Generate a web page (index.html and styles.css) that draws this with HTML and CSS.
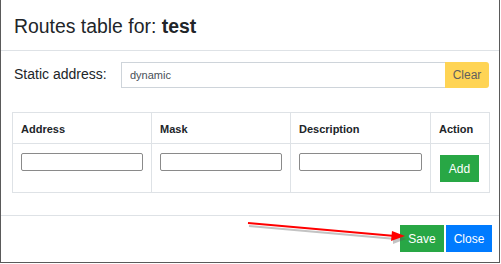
FILE: index.html
```html
<!DOCTYPE html>
<html lang="en">
<head>
    <meta charset="UTF-8">
    <meta name="viewport" content="width=device-width, initial-scale=1.0">
    <title>Routes table</title>
    <link rel="stylesheet" href="styles.css">
</head>
<body>
    <div class="modal">
        <div class="modal-header">
            <h5 class="modal-title">Routes table for: <b>test</b></h5>
        </div>
        <div class="modal-body">
            <div class="address-row">
                <label for="staticAddress">Static address:</label>
                <div class="input-group">
                    <input id="staticAddress" type="text" value="dynamic">
                    <button class="btn btn-clear">Clear</button>
                </div>
            </div>
            <table class="routes">
                <colgroup>
                    <col class="col-address">
                    <col class="col-mask">
                    <col class="col-desc">
                    <col class="col-action">
                </colgroup>
                <thead>
                    <tr>
                        <th>Address</th>
                        <th>Mask</th>
                        <th>Description</th>
                        <th>Action</th>
                    </tr>
                </thead>
                <tbody>
                    <tr>
                        <td><input type="text"></td>
                        <td><input type="text"></td>
                        <td><input type="text"></td>
                        <td><button class="btn btn-add">Add</button></td>
                    </tr>
                </tbody>
            </table>
        </div>
        <div class="modal-footer">
            <button class="btn btn-save">Save</button>
            <button class="btn btn-close">Close</button>
        </div>
        <!-- annotation arrow pointing at Save -->
        <svg class="arrow" width="501" height="264" viewBox="0 0 501 264">
            <g opacity="0.35" fill="#555" stroke="#555">
                <line x1="249" y1="226" x2="396" y2="239" stroke-width="2"/>
                <polygon points="393,234 406,239 393,244" stroke="none"/>
            </g>
            <g fill="#ff0000" stroke="#ff0000">
                <line x1="248" y1="223" x2="395" y2="236" stroke-width="2"/>
                <polygon points="392,231 405,236 391,241" stroke="none"/>
            </g>
        </svg>
    </div>
</body>
</html>
```

FILE: styles.css
```css
body {
    margin: 0;
    background-color: #fff;
    font-family: "Liberation Sans", Arial, sans-serif;
    color: #212529;
}
.modal {
    position: relative;
    width: 498px;
    height: 262px;
    border: 1px solid #5a5a5a;
    border-top: none;
    background-color: #fff;
    display: flex;
    flex-direction: column;
}
.modal-header {
    height: 51px;
    border-bottom: 1px solid #dee2e6;
    box-sizing: border-box;
    padding: 0 13px;
    display: flex;
    align-items: center;
}
.modal-title {
    margin: 0;
    font-size: 19.4px;
    font-weight: normal;
    line-height: 24px;
    padding-top: 2px;
}
.modal-title b {
    font-weight: bold;
}
.modal-body {
    padding: 11px 10px 0 11px;
    height: 165px;
    box-sizing: border-box;
    border-bottom: 1px solid #dee2e6;
}
.address-row {
    display: flex;
    align-items: flex-start;
    margin-left: 2px;
}
.address-row label {
    font-size: 14px;
    width: 107px;
    padding-top: 4px;
}
.input-group {
    display: flex;
    flex: 1;
    height: 26px;
}
.input-group input {
    flex: 1;
    height: 26px;
    box-sizing: border-box;
    border: 1px solid #ced4da;
    border-right: none;
    padding: 0 8px;
    font-family: "Liberation Sans", Arial, sans-serif;
    font-size: 11px;
    color: #495057;
    outline: none;
}
.btn {
    border: none;
    font-family: "Liberation Sans", Arial, sans-serif;
    color: #fff;
    padding: 0;
    cursor: pointer;
}
.btn-clear {
    width: 44px;
    height: 26px;
    background-color: #ffd454;
    color: #5f5f5f;
    font-size: 12px;
    border-radius: 0 3px 3px 0;
}
table.routes {
    margin-top: 24px;
    width: 477px;
    border-collapse: collapse;
    table-layout: fixed;
}
.col-address { width: 139px; }
.col-mask { width: 139px; }
.col-desc { width: 140px; }
.col-action { width: 59px; }
.routes th,
.routes td {
    border: 1px solid #dee2e6;
    padding: 8px;
    text-align: left;
    vertical-align: top;
}
.routes th {
    font-size: 11px;
    font-weight: bold;
    height: 14px;
    padding-top: 9px;
    padding-bottom: 7px;
    line-height: 14px;
}
.routes td {
    height: 32px;
}
.routes td input {
    display: block;
    width: 100%;
    height: 18px;
    margin-top: 1px;
    box-sizing: border-box;
    border: 1px solid #8a8a8a;
    border-radius: 2px;
    outline: none;
}
.btn-add {
    display: block;
    width: 39px;
    height: 27px;
    margin-top: 3px;
    margin-left: 1px;
    background-color: #28a745;
    font-size: 12px;
}
.modal-footer {
    flex: 1;
    display: flex;
    justify-content: flex-end;
    align-items: flex-start;
    padding: 9px 7px 0 0;
    gap: 2px;
}
.btn-save,
.btn-close {
    height: 27px;
    font-size: 12px;
}
.btn-save {
    width: 44px;
    background-color: #28a745;
}
.btn-close {
    width: 46px;
    background-color: #007bff;
}
.arrow {
    position: absolute;
    left: -1px;
    top: 0;
    pointer-events: none;
}
```
